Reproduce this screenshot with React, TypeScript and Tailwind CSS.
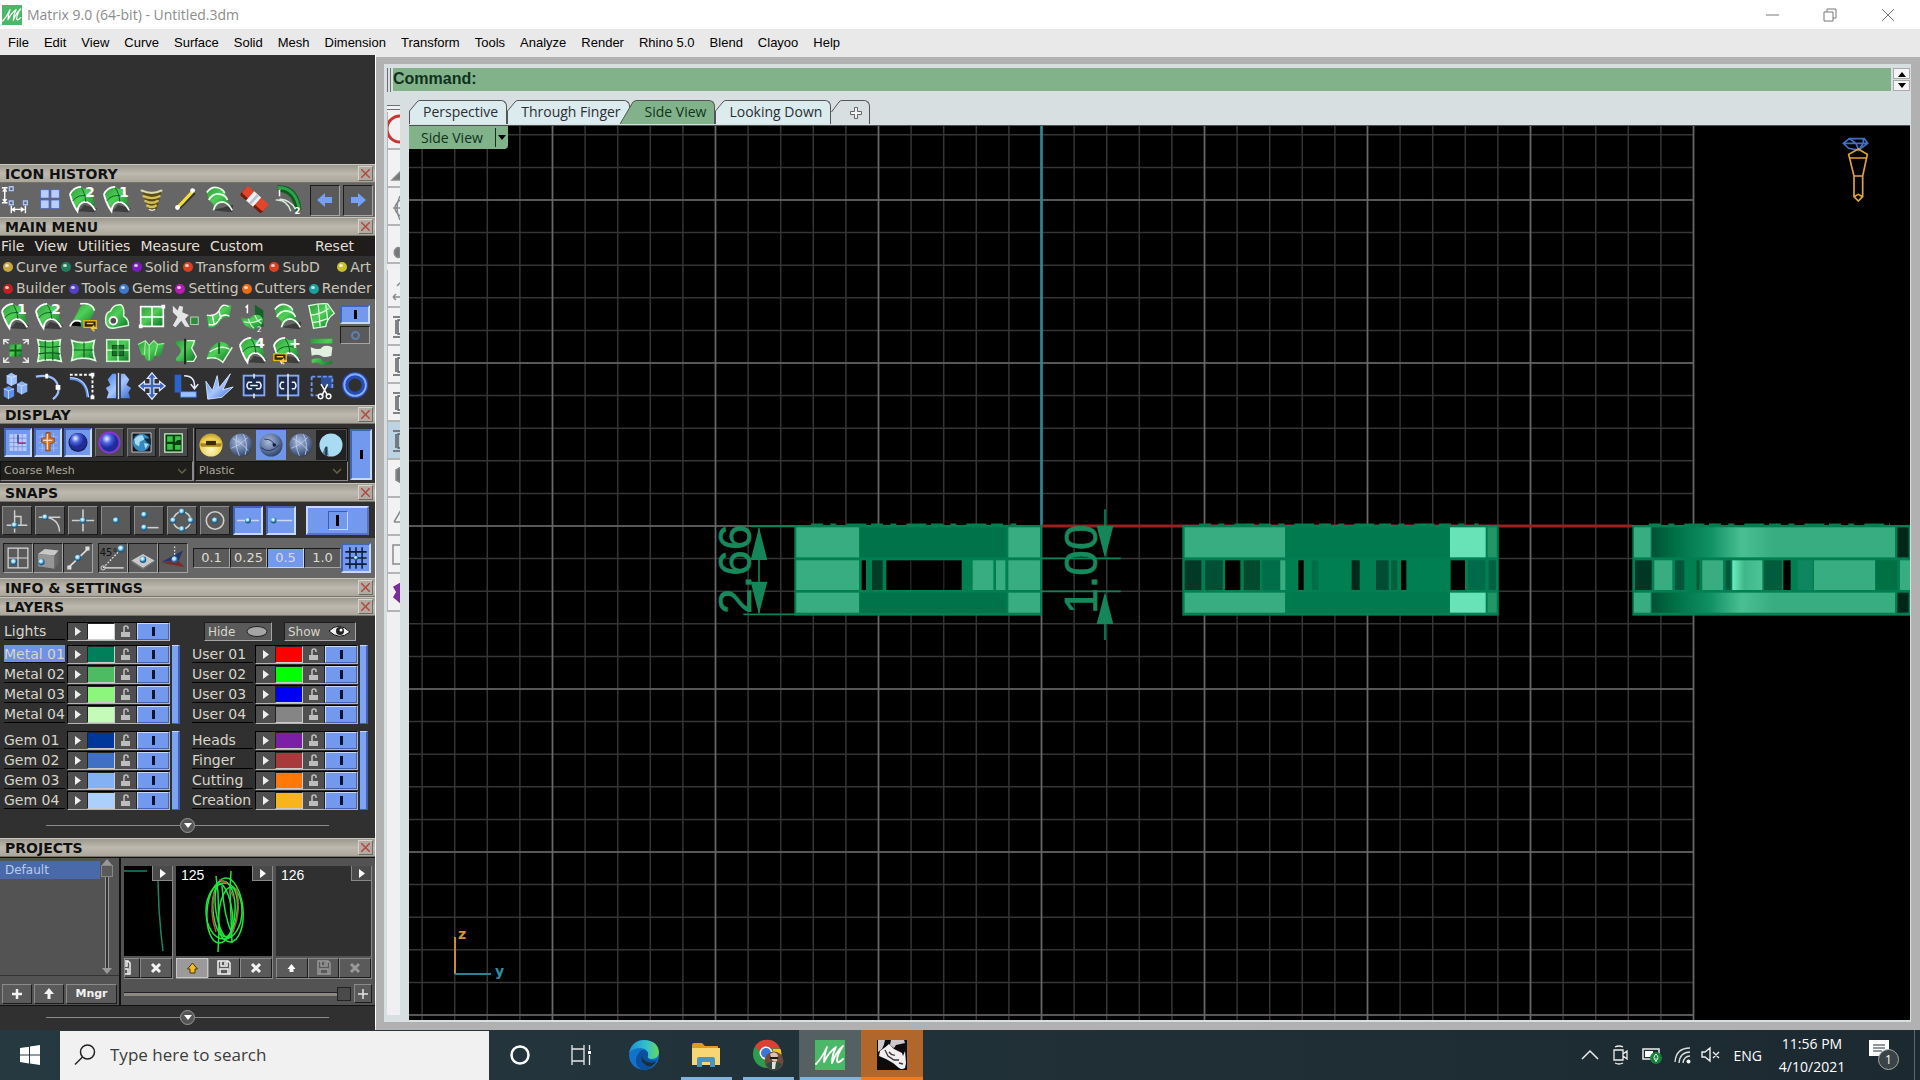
import type { ReactNode } from 'react'

const VERDANA = "font-['DejaVu_Sans',sans-serif]"
const SEGOE = "font-['Open_Sans',sans-serif]"
const ARIAL = "font-['Liberation_Sans',sans-serif]"

const RAISED = 'border border-t-[#8b8b8b] border-l-[#8b8b8b] border-r-[#1c1c1c] border-b-[#1c1c1c] bg-[#5a5a5a]'
const SUNKEN = 'border border-t-[#1c1c1c] border-l-[#1c1c1c] border-r-[#a5a5a5] border-b-[#a5a5a5] bg-[#5a5a5a]'
const BLUE_ON = 'border-2 border-t-[#4264b4] border-l-[#4264b4] border-r-[#c6d8ff] border-b-[#c6d8ff] bg-[#7399ee]'

/* ---------- icon artwork, drawn on a 34 x 34 box ---------- */

const patch = (
    <>
        <path d="M10 29 Q14 27 17 22 L31 26 L28 30 Z" fill="#0006" />
        <path d="M2 11 Q6 3 14 3 Q19 7 24 5 Q27 14 29 28 Q24 19 18 19 Q11 20 10 29 Q5 20 2 11Z" fill="url(#green)" />
        <path d="M2 11 Q6 3 14 3 M2 11 Q5 22 10 29 Q11 20 18 19 Q24 19 29 28" fill="none" stroke="#fff" strokeWidth="2" />
        <path d="M14 4 Q18 9 19 19 M5 18 Q10 10 24 13" fill="none" stroke="#0b5c1c" strokeWidth="1" />
    </>
)

const digit = (d: string) => (
    <text x="18" y="14" fontFamily="DejaVu Sans, sans-serif" fontWeight="bold" fontSize="15" fill="#fff">{d}</text>
)

const yellowTag = (x: number, y: number) => (
    <g transform={`translate(${x} ${y})`}>
        <rect x="0" y="0" width="13" height="7" fill="#2b2200" stroke="#f2b90c" strokeWidth="1.4" />
        <path d="M3 3h7M8 8h6M11 5l-3 3 3 3" stroke="#f2c53a" strokeWidth="1.6" fill="none" />
    </g>
)

const ribs = (
    <>
        <path d="M9 28 L31 22 L30 30Z" fill="#0006" />
        <path d="M3 9 Q8 2 15 4 Q22 6 23 12 L29 27 Q25 20 18 20 Q13 21 12 27 Q10 20 6 18 Q4 13 3 9Z" fill="url(#green)" />
        <path d="M3 9 Q8 2 15 4 Q21 6 22 10 M5 17 Q10 9 18 11 Q23 12 25 17 M10 28 Q12 19 20 19 Q26 20 30 28" fill="none" stroke="#e9ffe9" strokeWidth="1.8" />
    </>
)

const art: Record<string, ReactNode> = {
    dims: (
        <g fill="none" stroke="#fff" strokeWidth="1.5">
            <path d="M5 6v12M2 4h6M2 20h6M3 8l2-3 2 3M3 16l2 3 2-3M14 27h10M16 25l-3 2 3 2M22 25l3 2-3 2M12 23v8M27 23v8" />
            <path d="M10 3h4v4h-4zM10 18h4v4h-4zM25 18h4v4h-4z" stroke="#a9c4ff" />
        </g>
    ),
    panes: <path d="M7 6h9v9H7zM18 6h9v9h-9zM7 17h9v9H7zM18 17h9v9h-9z" fill="#b9ceff" stroke="#4667c0" strokeWidth=".8" />,
    edge1: <>{patch}{digit('1')}</>,
    edge2: <>{patch}{digit('2')}</>,
    edge4: <>{patch}{digit('4')}</>,
    edgePlus: <>{patch}{digit('+')}{yellowTag(2, 20)}</>,
    cone: (
        <g fill="none" strokeLinecap="round">
            <path d="M7 8h20l-5 19q-4 2-9 0z" fill="#5b4d12" />
            <path d="M6 7q11 5 21 0" stroke="#d9d9b0" strokeWidth="2.4" />
            <path d="M8 13q9 4 17 0M10 18q7 4 13 0M12 23q5 3 9 0" stroke="#d3c05a" strokeWidth="2.6" />
            <path d="M14 27q3 2 6 0" stroke="#ddd" strokeWidth="1.4" />
        </g>
    ),
    line: (
        <>
            <path d="M9 26 26 9" stroke="#333" strokeWidth="4" />
            <path d="M8 25 24 8" stroke="#f3df38" strokeWidth="3.4" />
            <circle cx="24" cy="7" r="2.6" fill="#fff" /><circle cx="8" cy="25" r="2.6" fill="#fff" />
        </>
    ),
    ribs,
    eraser: (
        <g transform="rotate(42 17 17)">
            <rect x="2" y="11" width="30" height="12" rx="2" fill="#7a160a" />
            <rect x="2" y="10" width="30" height="10" rx="2" fill="#e0462c" />
            <rect x="11" y="10" width="10" height="13" fill="#f3f3f3" />
            <path d="M15 10h3v13h-3z" fill="#b8c4cf" />
        </g>
    ),
    sweep: (
        <g fill="none">
            <path d="M6 5Q25 4 28 28" stroke="#0d5a1a" strokeWidth="7" />
            <path d="M6 4Q25 3 29 27" stroke="#2ea24a" strokeWidth="3" />
            <path d="M4 17q12-1 16 12M8 16q12 1 17 11" stroke="#d7e8d7" strokeWidth="1.6" />
            <path d="M7 8l1-1v6" stroke="#fff" strokeWidth="1.6" />
            <text x="24" y="32" fontFamily="DejaVu Sans, sans-serif" fontWeight="bold" fontSize="9" fill="#fff">2</text>
        </g>
    ),
    rail: (
        <>
            <path d="M2 26 Q6 20 11 10 Q14 2 22 3 Q28 4 29 9 L23 21 L20 28Z" fill="url(#green)" />
            <path d="M2 26q5-8 11-4l1 5" fill="#000" />
            <path d="M2 27q4-9 12-5M13 3q12-2 15 7" fill="none" stroke="#fff" strokeWidth="1.8" />
            {yellowTag(17, 21)}
        </>
    ),
    planar: (
        <>
            <path d="M4 23 Q3 12 9 11 Q12 3 20 4 Q24 6 23 16 Q29 20 28 26 L12 29 Q5 29 4 23Z" fill="url(#green)" stroke="#d9ffd9" strokeWidth="1.6" />
            <circle cx="12" cy="21" r="4" fill="#4b4b4b" stroke="#fff" strokeWidth="2" />
        </>
    ),
    quads: (
        <>
            <rect x="5" y="6" width="24" height="21" fill="url(#green)" stroke="#fff" strokeWidth="1.8" />
            <path d="M5 17h24M17 6v21" stroke="#fff" strokeWidth="1.8" />
            <path d="M3 25h4v4H3zM27 4h4v4h-4z" fill="#fff" />
        </>
    ),
    runner: (
        <>
            <path d="M3 5l5 5 2-5 4 1-1 6 7 3-4 4 5 9-5-1-4-6-6 7-3-2 5-9-5-5z" fill="#e4e4e4" />
            <rect x="22" y="17" width="8" height="8" fill="#2e8c40" stroke="#b8d8b8" />
        </>
    ),
    drape: (
        <>
            <path d="M3 15Q14 17 17 8Q20 2 29 5L27 18Q20 16 17 22Q13 29 5 28Z" fill="url(#green)" />
            <path d="M3 15Q14 17 17 8Q20 2 26 6M5 25Q13 27 17 18Q20 13 27 16M9 16l2 10M16 11l2 8" fill="none" stroke="#fff" strokeWidth="1.5" />
        </>
    ),
    loftTwo: (
        <>
            <path d="M18 4l9 6v18l-9-5z" fill="#17602a" />
            <path d="M3 17q8 4 14-2 7-2 10 5-1 10-12 10Q5 27 3 17Z" fill="url(#green)" />
            <path d="M11 19q2 7 6 10M18 15q2 6 7 9M6 22q10 3 19-3" fill="none" stroke="#c9f5c9" strokeWidth="1.3" />
            <path d="M8 7l2-2v8" fill="none" stroke="#fff" strokeWidth="1.6" />
            <text x="20" y="33" fontFamily="DejaVu Sans, sans-serif" fontSize="8" fill="#fff">2</text>
        </>
    ),
    fan: (
        <>
            <path d="M3 5Q16 2 23 3L30 13Q22 19 21 27L8 29Z" fill="url(#green)" stroke="#d9ffd9" strokeWidth="1.4" />
            <path d="M5 15q12-1 19-7M13 4l2 23M21 4l2 16M7 23q8-1 15-4" fill="none" stroke="#e9ffe9" strokeWidth="1.3" />
        </>
    ),
    target: (
        <>
            <path d="M10 10h13v13H10z" fill="url(#green)" />
            <path d="M16.5 10v13M10 16.5h13" stroke="#0d5a1a" strokeWidth="2" />
            <path d="M4 10V5h6M24 5h6v5M30 24v5h-6M10 29H4v-5M4 5l5 4M30 5l-5 4M4 29l5-5M30 29l-5-5" fill="none" stroke="#e5e5e5" strokeWidth="1.6" />
        </>
    ),
    mesh: (
        <>
            <path d="M4 5Q16 8 28 5Q26 17 29 28Q16 25 4 28Q7 16 4 5Z" fill="url(#green)" stroke="#d9ffd9" strokeWidth="1.8" />
            <path d="M5 12q12 2 23 0M5 20q12-2 23 0M12 6v21M20 6v21" fill="none" stroke="#0b5c1c" strokeWidth="1.2" />
        </>
    ),
    pinch: (
        <>
            <path d="M4 6Q16 10 28 6Q25 17 29 27Q16 22 4 27Q7 16 4 6Z" fill="url(#green)" stroke="#d9ffd9" strokeWidth="1.8" />
            <path d="M17 8v16M6 16h21" fill="none" stroke="#0b5c1c" strokeWidth="1.2" />
        </>
    ),
    inset: (
        <>
            <rect x="5" y="5" width="24" height="23" fill="url(#green)" stroke="#c9f5c9" strokeWidth="1.6" />
            <rect x="11" y="11" width="12" height="11" fill="#1d6b2a" stroke="#0a4a16" />
            <path d="M17 5v6M17 22v6M5 16h6M23 16h6" stroke="#e9ffe9" strokeWidth="1.4" />
            <path d="M17 11v11M11 16h12" stroke="#57c45e" strokeWidth="1.4" />
        </>
    ),
    folds: (
        <>
            <path d="M2 10l8-4 4 5 5-5 4 4 7-1-4 14-6-1-3 6-6-1-2-5-3-1z" fill="url(#green)" />
            <path d="M2 10l8-4 4 5 5-5 4 4 7-1M10 6l-1 15M14 11v16M23 10l-3 12" fill="none" stroke="#a7efa7" strokeWidth="1.2" />
        </>
    ),
    revolve: (
        <>
            <path d="M7 6h17q5 2 2 5-6 5 0 11 3 3-2 6H8q-4-2 1-6 5-5 0-10-5-4-2-6z" fill="url(#green)" />
            <path d="M18 6h8l-3 8 5 9-3 5h-7" fill="none" stroke="#d9ffd9" strokeWidth="1.4" />
            <path d="M16 4v27" stroke="#111" strokeWidth="1.6" />
        </>
    ),
    dome: (
        <>
            <path d="M3 25Q7 9 18 7Q27 9 28 16L20 28Q11 24 3 25Z" fill="url(#green)" />
            <path d="M3 25q10-3 17 4l10-16M6 18q12-8 21-3" fill="none" stroke="#d9ffd9" strokeWidth="1.6" />
            <path d="M16 8v12" stroke="#0b4a16" strokeWidth="1.6" />
        </>
    ),
    strips: (
        <>
            <path d="M5 4h23v5H5zM6 26q10-3 11 1 2 3 11 0v3q-10 4-13 1-2-3-9-1z" fill="url(#green)" />
            <path d="M5 13q10 4 12 0 4-3 11 0l-1 9q-8 3-11 0-4-2-10 0z" fill="#dff0df" />
        </>
    ),
    cubes: (
        <>
            <path d="M7 6l5-3 6 3v8l-6 3-5-3z" fill="#9dc1ff" /><path d="M18 15l5-3 6 3v8l-6 3-5-3z" fill="#88b0f7" /><path d="M4 20l5-3 6 3v8l-6 3-5-3z" fill="#5f8fec" />
            <path d="M7 6l5 2 6-2M12 8v9M18 15l5 2 6-2M23 17v9M4 20l5 2 6-2M9 22v9" fill="none" stroke="#d9e6ff" strokeWidth=".8" />
        </>
    ),
    arc: (
        <>
            <path d="M2 7Q25 3 26 21Q26 27 20 31" fill="none" stroke="#9dbbf7" strokeWidth="2.4" />
            <path d="M12 4h3v5h-3zM23 16h5v5h-5z" fill="#fff" />
        </>
    ),
    fillet: (
        <g fill="none">
            <path d="M2 5h24v24" stroke="#fff" strokeWidth="2" strokeDasharray="3 2" />
            <path d="M2 9Q20 9 21 29" stroke="#5b8df0" strokeWidth="3" />
            <path d="M2 8Q20 8 22 29" stroke="#cfe0ff" strokeWidth="1" />
            <path d="M24 3h4v4h-4zM24 27h4v4h-4z" fill="#fff" />
        </g>
    ),
    mirror: (
        <>
            <path d="M15 4h-4l-5 6 3 6-5 3 3 5-2 6h10zM20 4h4l5 6-3 6 5 3-3 5 2 6H20z" fill="url(#blue)" />
            <path d="M17.5 3v28" stroke="#cfe0ff" strokeWidth="1.5" />
        </>
    ),
    move: <path d="M17 3l5 6h-3v6h6v-3l6 5-6 5v-3h-6v6h3l-5 6-5-6h3v-6H9v3l-6-5 6-5v3h6V9h-3z" fill="#3f63b8" stroke="#dce8ff" strokeWidth="1.3" />,
    rotate: (
        <>
            <path d="M5 5h7v19H5z" fill="#2d62cc" /><path d="M11 23h17v6H11z" fill="#9dc0ff" stroke="#2d62cc" />
            <path d="M15 6Q27 6 26 19M22 15l4 5 4-5" fill="none" stroke="#e8efff" strokeWidth="1.6" />
        </>
    ),
    splay: <path d="M4 31L2 12l7 10L14 6l2 13L28 4l-8 17 11-3-12 11Z" fill="url(#blue)" stroke="#cfe0ff" strokeWidth="1" />,
    chain: (
        <g fill="none" stroke="#e8efff" strokeWidth="1.6">
            <rect x="6" y="6" width="22" height="21" stroke="#83a8f5" strokeWidth="2" fill="#1e2b4b" />
            <path d="M15 13h-4q-3 3.500 0 7h4M19 13h4q3 3.500 0 7h-4M13 16.500h8M17 4v5M17 25v5" />
        </g>
    ),
    unchain: (
        <g fill="none" stroke="#e8efff" strokeWidth="1.6">
            <rect x="6" y="6" width="22" height="21" stroke="#83a8f5" strokeWidth="2" fill="#1e2b4b" />
            <path d="M13 13h-3q-3 3.500 0 7h3M21 13h3q3 3.500 0 7h-3M17 4v28" />
        </g>
    ),
    cut: (
        <>
            <path d="M16 6h12v14L16 16z" fill="#2d4f95" />
            <path d="M6 7h22v14M6 7v20h11" fill="none" stroke="#6d96ee" strokeWidth="2" strokeDasharray="4 2" />
            <path d="M16 15l7 12M23 15l-6 12" stroke="#fff" strokeWidth="1.6" />
            <circle cx="15.5" cy="28" r="2.5" fill="none" stroke="#fff" strokeWidth="1.5" /><circle cx="24" cy="28" r="2.5" fill="none" stroke="#fff" strokeWidth="1.5" />
        </>
    ),
    torus: (
        <>
            <circle cx="16" cy="16" r="10.5" fill="none" stroke="#274db5" strokeWidth="7" />
            <circle cx="16" cy="16" r="11.5" fill="none" stroke="#86acff" strokeWidth="2" />
        </>
    ),

    /* display */
    cplane: (
        <>
            <path d="M5 5h24v24H5z" fill="#b9caff" />
            <path d="M5 11h24M5 17h24M5 23h24M11 5v24M17 5v24M23 5v24" stroke="#6f86d8" strokeWidth="1" />
            <path d="M17 6v12" stroke="#2338c8" strokeWidth="2" /><path d="M17 18h11" stroke="#d0145a" strokeWidth="2" />
        </>
    ),
    ornament: (
        <>
            <path d="M4 9h26M4 17h26M4 25h26M9 4v26M17 4v26M25 4v26" stroke="#a9c2ff" strokeWidth="1" />
            <path d="M14 3h6v7l6 1v6l-6 2v10h-6V19l-6-2v-6l6-1z" fill="#d4762c" stroke="#7c3608" strokeWidth="1" />
            <path d="M16 5v22M10 14h13" stroke="#ffe2c4" strokeWidth="1.8" />
        </>
    ),
    sphereBlue: (
        <>
            <circle cx="17" cy="17" r="13.5" fill="#16245c" />
            <circle cx="17" cy="16" r="12" fill="url(#ballBlue)" />
        </>
    ),
    spherePurple: (
        <>
            <circle cx="17" cy="17" r="14" fill="#8a35d6" />
            <circle cx="17" cy="17" r="11.5" fill="url(#ballBlue)" />
        </>
    ),
    globe: (
        <>
            <path d="M5 5h24v24H5z" fill="#14181c" stroke="#dfe8ef" strokeWidth="1" />
            <circle cx="17" cy="17" r="11" fill="#3688bd" />
            <path d="M8 13q5-6 10-5l3 5-6 3-1 6-5-3zM20 18l6 1-4 6z" fill="#a4dcf7" />
            <path d="M20 12h9v8l-5-3z" fill="#152a38" />
        </>
    ),
    gridGreen: (
        <>
            <path d="M6 6h22v23H6z" fill="#0c3d12" stroke="#c9f0c9" strokeWidth="1.6" />
            <path d="M9 9h7v7H9zM19 9h7v5h-4l-3 3zM9 19h7v7H9zM19 20h7v6h-7z" fill="#37c445" />
        </>
    ),
    gold: (
        <>
            <circle cx="17" cy="17" r="14" fill="url(#ballGold)" />
            <path d="M4 15h26q0 3-1 4H5q-1-1-1-4z" fill="#a88420" /><path d="M11 12h12v5H11z" fill="#3b2a04" />
        </>
    ),
    wire: (
        <>
            <circle cx="17" cy="17" r="14" fill="url(#ballSlate)" />
            <path d="M7 9q10 4 19 15M5 21Q16 18 25 8M12 5q-3 12 3 25M20 4q6 12 2 25" fill="none" stroke="#c3d2ea" strokeWidth="1" />
        </>
    ),
    slate: (
        <>
            <circle cx="17" cy="17" r="14" fill="url(#ballSlate)" />
            <path d="M9 10q9-1 13 8M19 15l3 3M5 20q10 9 22-3" fill="none" stroke="#1a2948" strokeWidth="1" />
            <circle cx="21" cy="17" r="2" fill="#111c33" />
        </>
    ),
    glass: (
        <>
            <circle cx="17" cy="17" r="14" fill="#a9dcf2" />
            <path d="M7 28q2-10 6-9l1 11q-4 0-7-2z" fill="#4c7d96" /><path d="M11 19v11" stroke="#10252f" strokeWidth="1.6" />
        </>
    ),

    /* snaps */
    perp: <><path d="M4 23h26M14 4v28M14 12h8v11" fill="none" stroke="#cfcfcf" strokeWidth="1.8" /><circle cx="14" cy="23" r="4" fill="url(#dot)" /></>,
    tangent: <><path d="M3 13h27M12 13Q28 15 29 31" fill="none" stroke="#cfcfcf" strokeWidth="1.8" /><circle cx="11" cy="13" r="4" fill="url(#dot)" /></>,
    cross: <><path d="M3 17h28M17 3v28" stroke="#cfcfcf" strokeWidth="2" /><circle cx="17" cy="17" r="4" fill="url(#dot)" /></>,
    point: <circle cx="17" cy="17" r="4" fill="url(#dot)" />,
    near: <><path d="M12 26h17" stroke="#cfcfcf" strokeWidth="2" /><circle cx="11" cy="10" r="4" fill="url(#dot)" /><circle cx="11" cy="26" r="4" fill="url(#dot)" /></>,
    quad: <><circle cx="17" cy="17" r="11" fill="none" stroke="#cfcfcf" strokeWidth="2" /><circle cx="17" cy="6" r="4" fill="url(#dot)" /><circle cx="17" cy="28" r="4" fill="url(#dot)" /><circle cx="6" cy="17" r="4" fill="url(#dot)" /><circle cx="28" cy="17" r="4" fill="url(#dot)" /></>,
    center: <><circle cx="17" cy="17" r="11" fill="none" stroke="#cfcfcf" strokeWidth="2" /><circle cx="17" cy="17" r="4" fill="url(#dot)" /></>,
    mid: <><path d="M2 17h30" stroke="#cfd8f0" strokeWidth="2" /><circle cx="17" cy="17" r="4" fill="url(#dot)" /></>,
    end: <><path d="M7 17h25" stroke="#cfd8f0" strokeWidth="2" /><circle cx="7" cy="17" r="4" fill="url(#dot)" /></>,
    snapGrid: <><path d="M5 5h24v24H5zM5 17h24M17 5v24" fill="none" stroke="#d8d8d8" strokeWidth="1.5" /><circle cx="12" cy="22" r="4" fill="url(#dot)" /></>,
    box: <><path d="M5 12l8-6 17 2-5 6z" fill="#c8c8c8" /><path d="M5 12l20 2v16L5 27z" fill="#969696" /><path d="M25 14l5-6v15l-5 7z" fill="#666" /><circle cx="9" cy="22" r="4" fill="url(#dot)" /></>,
    segment: <><path d="M6 28L29 6" stroke="#ddd" strokeWidth="2" /><path d="M4 26h5v5H4zM26 3h5v5h-5z" fill="#ddd" /><circle cx="17" cy="17" r="4" fill="url(#dot)" /></>,
    angle: (
        <>
            <text x="1" y="14" fontFamily="DejaVu Sans, sans-serif" fontSize="12" fill="#111">45°</text>
            <path d="M5 29L26 7" stroke="#eee" strokeWidth="1.5" strokeDasharray="2 2" /><path d="M7 29h23" stroke="#eee" strokeWidth="1.5" />
            <circle cx="5" cy="29" r="2.5" fill="none" stroke="#eee" /><circle cx="27" cy="6" r="4.5" fill="url(#dot)" />
        </>
    ),
    plane: <><path d="M17 12l14 8-14 9L3 20z" fill="#c9c9c9" /><path d="M3 20l14 9 14-9v2l-14 9L3 22z" fill="#777" /><circle cx="17" cy="19" r="4" fill="url(#dot)" /></>,
    project: <><path d="M3 22L29 8l-5 12z" fill="#27366a" /><path d="M3 23l20-3 8 8z" fill="#7c2a2a" /><path d="M19 3v18" stroke="#ddd" strokeDasharray="2 2" strokeWidth="1.5" /><circle cx="19" cy="19" r="4" fill="url(#dot)" /></>,
    hash: <><path d="M3 9h28M3 17h28M3 25h28M9 3v28M17 3v28M25 3v28" stroke="#111c3c" strokeWidth="2" /><circle cx="17" cy="17" r="3" fill="url(#dot)" /></>,
}

interface IconProps {
    name: string;
    className?: string;
}

const Icon = ({ name, className = 'w-[34px] h-[34px]' }: IconProps) => (
    <svg viewBox="0 0 34 34" className={`block shrink-0 ${className}`}>{art[name]}</svg>
)

const Gradients = () => (
    <svg width="0" height="0" className="absolute">
        <defs>
            <linearGradient id="green" x1="0" y1="0" x2="1" y2="1">
                <stop offset="0" stopColor="#2c9a3c" /><stop offset=".45" stopColor="#4fcf57" /><stop offset="1" stopColor="#0d7426" />
            </linearGradient>
            <linearGradient id="blue" x1="0" y1="0" x2="1" y2="1">
                <stop offset="0" stopColor="#4b82ea" /><stop offset=".5" stopColor="#a6c6ff" /><stop offset="1" stopColor="#3366cf" />
            </linearGradient>
            <linearGradient id="band">
                <stop offset="0" stopColor="#005235" /><stop offset=".1" stopColor="#007147" /><stop offset=".24" stopColor="#109064" />
                <stop offset=".37" stopColor="#4abf94" /><stop offset=".5" stopColor="#38ad82" /><stop offset="1" stopColor="#38ad82" />
            </linearGradient>
            <linearGradient id="shine">
                <stop offset="0" stopColor="#6cefc0" /><stop offset=".4" stopColor="#3fb78b" /><stop offset="1" stopColor="#4fc298" />
            </linearGradient>
            <radialGradient id="dot" cx=".4" cy=".35"><stop offset="0" stopColor="#fff" /><stop offset=".5" stopColor="#8fd6f5" /><stop offset="1" stopColor="#1b5e8a" /></radialGradient>
            <radialGradient id="ballBlue" cx=".35" cy=".3"><stop offset="0" stopColor="#f2f5ff" /><stop offset=".5" stopColor="#4a63e0" /><stop offset="1" stopColor="#202c98" /></radialGradient>
            <radialGradient id="ballGold" cx=".5" cy=".7" r=".7"><stop offset="0" stopColor="#fff6c4" /><stop offset=".7" stopColor="#edcf4c" /><stop offset="1" stopColor="#b89a30" /></radialGradient>
            <radialGradient id="ballSlate" cx=".4" cy=".35" r=".7"><stop offset="0" stopColor="#a9bcdb" /><stop offset=".6" stopColor="#5d739c" /><stop offset="1" stopColor="#2c3d5e" /></radialGradient>
        </defs>
    </svg>
)

/* ---------- window chrome ---------- */

const MatrixLogo = ({ className }: { className: string }) => (
    <svg viewBox="0 0 30 30" className={className}>
        <rect width="30" height="30" fill="#4bb868" />
        <path d="M1 24Q7 18 12 7Q9 16 9 22Q14 12 21 7Q17 15 17 23Q21 12 28 6Q22 15 22 20Q22 25 28 19" fill="none" stroke="#fff" strokeWidth="1.8" strokeLinejoin="round" strokeLinecap="round" />
    </svg>
)

const TitleBar = () => (
    <header className={`flex items-center h-[29px] shrink-0 bg-white text-[#8c8c8c] text-[14px] ${SEGOE}`}>
        <MatrixLogo className="w-[20px] h-[20px] ml-[2px] mr-[5px]" />
        <h1>Matrix 9.0 (64-bit) - Untitled.3dm</h1>
        <div className="flex ml-auto mr-[3px]">
            {['M11 14h13', 'M11 11h9v9h-9zM14 11V8h9v9h-3', 'M11 8l12 12M23 8L11 20'].map((d, i) => (
                <button key={d} aria-label={['Minimize', 'Restore', 'Close'][i]} className="flex items-center justify-center w-[58px] h-[29px]">
                    <svg width="34" height="28" fill="none" stroke="#777"><path d={d} /></svg>
                </button>
            ))}
        </div>
    </header>
)

const menus = ['File', 'Edit', 'View', 'Curve', 'Surface', 'Solid', 'Mesh', 'Dimension', 'Transform', 'Tools', 'Analyze', 'Render', 'Rhino 5.0', 'Blend', 'Clayoo', 'Help']

const MenuBar = () => (
    <nav className={`flex items-center gap-[15px] h-[26px] pt-[2px] px-2 shrink-0 bg-[#e9e9e9] text-black text-[13px] ${ARIAL}`}>
        {menus.map((m) => <button key={m}>{m}</button>)}
    </nav>
)

/* ---------- left panels ---------- */

const PanelHeader = ({ title }: { title: string }) => (
    <div className="flex items-center justify-between h-[19px] shrink-0 pl-[5px] pr-[2px] border-y border-t-[#c9c6bd] border-b-[#77746c] bg-linear-to-b from-[#9c998f] via-[#bdb9af] to-[#aaa69c]">
        <h2 className="pt-[2px] text-[14px] leading-[17px] font-bold text-[#111]">{title}</h2>
        <button aria-label={`Close ${title}`} className="flex items-center justify-center w-[15px] h-[15px] border border-[#6e6a62] border-t-[#d8d4cc] border-l-[#d8d4cc] bg-[#b0aca4]">
            <svg width="9" height="9" stroke="#b5483f" strokeWidth="1.5"><path d="M0 0l9 9M9 0L0 9" /></svg>
        </button>
    </div>
)

const IconHistory = () => (
    <div className="flex items-center h-[34px] shrink-0 bg-[#666]">
        {['dims', 'panes', 'edge2', 'edge1', 'cone', 'line', 'ribs', 'eraser', 'sweep'].map((n) => (
            <button key={n} aria-label={n} className="w-[34px]"><Icon name={n} className="w-[32px] h-[32px]" /></button>
        ))}
        <div className="flex gap-[3px] ml-[4px]">
            {['M17 9H10V5L2 12l8 7v-4h7z', 'M3 9h7V5l8 7-8 7v-4H3z'].map((d, i) => (
                <button key={d} aria-label={i ? 'Next' : 'Previous'} className={`flex items-center justify-center w-[30px] h-[31px] ${SUNKEN}`}>
                    <svg width="20" height="24" fill="#76a0f5"><path d={d} /></svg>
                </button>
            ))}
        </div>
    </div>
)

interface CategoryProps {
    label: string;
    color: string;
}

const Category = ({ label, color }: CategoryProps) => (
    <button className="flex items-center gap-[3px]">
        <svg width="10" height="10" className="mt-px">
            <circle cx="5" cy="5" r="5" fill={color} /><ellipse cx="4" cy="3.5" rx="2" ry="1.6" fill="#fff" opacity=".75" />
        </svg>
        {label}
    </button>
)

const topCategories = [
    { label: 'Curve', color: '#c9a640' }, { label: 'Surface', color: '#1f7d5c' }, { label: 'Solid', color: '#7a1cc2' },
    { label: 'Transform', color: '#d84020' }, { label: 'SubD', color: '#d84020' },
]
const bottomCategories = [
    { label: 'Builder', color: '#c42020' }, { label: 'Tools', color: '#5540c8' }, { label: 'Gems', color: '#3f78c8' },
    { label: 'Setting', color: '#b81cb8' }, { label: 'Cutters', color: '#e86c18' }, { label: 'Render', color: '#1aa0a0' },
]

const greenTools = [
    'edge1', 'edge2', 'rail', 'planar', 'quads', 'runner', 'drape', 'loftTwo', 'ribs', 'fan',
    'target', 'mesh', 'pinch', 'inset', 'folds', 'revolve', 'dome', 'edge4', 'edgePlus', 'strips',
]
const blueTools = ['cubes', 'arc', 'fillet', 'mirror', 'move', 'rotate', 'splay', 'chain', 'unchain', 'cut', 'torus']

const MainMenu = () => (
    <div className="shrink-0 text-[14px] leading-[20px] text-[#e2dfd5]">
        <div className="flex gap-[10px] h-[20px] pl-px pr-[21px] bg-[#1f1d1c]">
            {['File', 'View', 'Utilities', 'Measure', 'Custom'].map((m) => <button key={m}>{m}</button>)}
            <button className="ml-auto">Reset</button>
        </div>
        <div className="h-[43px] bg-[#303030] text-[#c9c6ba]">
            <div className="flex gap-1 h-[21px] pl-[3px] pr-[4px] whitespace-nowrap">
                {topCategories.map((c) => <Category key={c.label} {...c} />)}
                <div className="flex ml-auto"><Category label="Art" color="#c8c02c" /></div>
            </div>
            <div className="flex gap-[3px] h-[22px] pl-[3px] whitespace-nowrap">
                {bottomCategories.map((c) => <Category key={c.label} {...c} />)}
            </div>
        </div>
        <div className="flex h-[69px] bg-[#666]">
            <div className="grid grid-cols-10 content-center w-[340px] pt-px">
                {greenTools.map((n, i) => <button key={i} aria-label={n}><Icon name={n} className="w-[32px] h-[34px]" /></button>)}
            </div>
            <div className="pt-[6px]">
                <button aria-label="Builder on" className={`flex items-center justify-center w-[30px] h-[19px] ${BLUE_ON}`}><span className="w-[3px] h-[9px] bg-black" /></button>
                <button aria-label="Builder off" className={`flex items-center justify-center w-[30px] h-[18px] mt-[2px] ${SUNKEN}`}><span className="w-[9px] h-[9px] rounded-full border-2 border-[#5f7fae]" /></button>
            </div>
        </div>
        <div className="flex items-center h-[37px] pb-[2px] bg-[#303030]">
            {blueTools.map((n) => <button key={n} aria-label={n} className="w-[34px]"><Icon name={n} className="w-[32px] h-[34px]" /></button>)}
        </div>
    </div>
)

interface PickerProps {
    label: string;
    value: string;
}

const Picker = ({ label, value }: PickerProps) => (
    <div className="relative h-[20px] border border-[#111] border-r-[#8b8b8b] border-b-[#8b8b8b] bg-[#201e1b]">
        <select aria-label={label} className="block appearance-none w-full h-[18px] pl-[3px] bg-transparent text-[11px] leading-[18px] text-[#aaa79d]">
            <option>{value}</option>
        </select>
        <svg width="9" height="6" className="absolute right-[5px] top-[6px]" fill="none" stroke="#66634c" strokeWidth="1.5"><path d="M0 1l4 4 4-4" /></svg>
    </div>
)

const Display = () => (
    <div className="flex h-[59px] shrink-0 pt-[4px] pb-[2px] bg-[#303030]">
        <div className="w-[194px] shrink-0 border-r border-[#888]">
            <div className="flex gap-[2px] h-[33px] pl-[4px]">
                {['cplane', 'ornament', 'sphereBlue'].map((n) => (
                    <button key={n} aria-label={n} className={`w-[28px] h-[29px] ${BLUE_ON}`}><Icon name={n} className="w-full h-full" /></button>
                ))}
                {['spherePurple', 'globe', 'gridGreen'].map((n) => (
                    <button key={n} aria-label={n} className="w-[29px] h-[29px] ml-px border border-[#1c1c1c] border-t-[#777] border-l-[#777] bg-[#4c4c4c]"><Icon name={n} className="w-full h-full" /></button>
                ))}
            </div>
            <Picker label="Mesh quality" value="Coarse Mesh" />
        </div>
        <div className="w-[153px] shrink-0 ml-px">
            <div className="flex h-[33px] pt-px border border-[#111] border-b-0 bg-[#4c4c4c]">
                {['gold', 'wire', 'slate', 'wire', 'glass'].map((n, i) => (
                    <button key={i} aria-label={n} className={`flex items-center justify-center w-[30px] h-[30px] ${i === 2 ? 'bg-[#6f95ea]' : i === 4 ? 'bg-[#222]' : ''}`}><Icon name={n} className="w-[28px] h-[28px]" /></button>
                ))}
            </div>
            <Picker label="Material" value="Plastic" />
        </div>
        <button aria-label="Shading on" className={`flex items-center justify-center w-[22px] h-[51px] mt-px ml-[2px] ${BLUE_ON}`}><span className="w-[3px] h-[9px] bg-black" /></button>
    </div>
)

const Snaps = () => (
    <div className="shrink-0">
        <div className="flex items-center gap-[3px] h-[36px] pl-[2px] bg-[#303030]">
            {['perp', 'tangent', 'cross', 'point', 'near', 'quad', 'center', 'mid', 'end'].map((n) => (
                <button key={n} aria-label={n} className={`w-[30px] h-[29px] ${n === 'mid' || n === 'end' ? BLUE_ON : RAISED}`}><Icon name={n} className="w-full h-full" /></button>
            ))}
            <button aria-label="Snaps on" className="flex items-center justify-center w-[63px] h-[29px] ml-[7px] border-2 border-[#5674bd] border-t-[#c6d8ff] border-l-[#c6d8ff] bg-[#7399ee]">
                <span className="flex items-center justify-center w-[20px] h-[19px] border border-[#3f5ca8] border-r-[#c6d8ff] border-b-[#c6d8ff]"><span className="w-[3px] h-[11px] bg-black" /></span>
            </button>
        </div>
        <div className="flex items-center h-[40px] pl-[3px] bg-[#666]">
            {['snapGrid', 'box', 'segment'].map((n) => (
                <button key={n} aria-label={n} className={`w-[30px] h-[30px] ${SUNKEN}`}><Icon name={n} className="w-full h-full" /></button>
            ))}
            <div className="flex mx-[5px]">
                {['angle', 'plane', 'project'].map((n) => (
                    <button key={n} aria-label={n} className={`w-[30px] h-[30px] ${SUNKEN}`}><Icon name={n} className="w-full h-full" /></button>
                ))}
            </div>
            {['0.1', '0.25', '0.5', '1.0'].map((v) => (
                <button key={v} className={`w-[37px] h-[20px] text-[13px] leading-[18px] text-[#dedbd0] ${v === '0.5' ? 'border border-[#c6d8ff] border-t-[#111] border-l-[#111] bg-[#7399ee]' : SUNKEN}`}>{v}</button>
            ))}
            <button aria-label="Grid snap" className={`w-[30px] h-[30px] ${BLUE_ON}`}><Icon name="hash" className="w-full h-full" /></button>
        </div>
    </div>
)

interface LayerProps {
    name: string;
    color: string;
    active?: boolean;
}

const Layer = ({ name, color, active }: LayerProps) => (
    <li className="flex items-start h-[20px]">
        <button className={`w-[61px] h-[18px] shrink-0 pt-px border-b border-black text-left text-[14px] leading-[16px] whitespace-nowrap text-[#d8d5ca] ${active ? 'bg-[#6d92e6]' : ''}`}>{name}</button>
        <div className="flex w-[103px] h-[19px] ml-[2px] border border-t-black border-l-black border-r-[#b5b5b5] border-b-[#b5b5b5] bg-[#4f4f4f]">
            <button aria-label={`${name} options`} className="flex items-center justify-center w-[19px]">
                <svg width="6" height="9" fill="#eee"><path d="M0 0l6 4.500L0 9z" /></svg>
            </button>
            <button aria-label={`${name} color`} className="w-[28px] border border-t-[#222] border-l-[#222] border-r-[#ccc] border-b-[#ccc]" style={{ background: color }} />
            <button aria-label={`Lock ${name}`} className="flex items-center justify-center w-[22px] border-r border-[#222]">
                <svg width="11" height="13"><path d="M1 7h9v5H1z" fill="#bdbdbd" /><path d="M4 7V3q0-2 2-2t2 2v1" fill="none" stroke="#bdbdbd" strokeWidth="1.6" /></svg>
            </button>
            <button aria-label={`Show ${name}`} className="flex items-center justify-center flex-1 border border-t-[#c6d8ff] border-l-[#c6d8ff] border-r-[#4264b4] border-b-[#4264b4] bg-[#7399ee]"><span className="w-[3px] h-[9px] bg-[#0a1430]" /></button>
        </div>
    </li>
)

const LayerGroup = ({ layers }: { layers: LayerProps[] }) => (
    <div className="flex w-[176px] gap-[2px]">
        <ul>{layers.map((l) => <Layer key={l.name} {...l} />)}</ul>
        <button aria-label="Toggle group" className="w-[8px] h-[79px] border-r-2 border-b border-[#3f62b4] border-t border-t-[#c6d8ff] bg-[#7ea3f2]" />
    </div>
)

const groups: LayerProps[][] = [
    [{ name: 'Metal 01', color: '#00805a', active: true }, { name: 'Metal 02', color: '#4cbb62' }, { name: 'Metal 03', color: '#8cf57c' }, { name: 'Metal 04', color: '#c4fbb8' }],
    [{ name: 'User 01', color: '#ff0000' }, { name: 'User 02', color: '#00ff00' }, { name: 'User 03', color: '#0000f5' }, { name: 'User 04', color: '#858585' }],
    [{ name: 'Gem 01', color: '#00379b' }, { name: 'Gem 02', color: '#3f70c4' }, { name: 'Gem 03', color: '#84b1f3' }, { name: 'Gem 04', color: '#acd0fb' }],
    [{ name: 'Heads', color: '#7a1fa6' }, { name: 'Finger', color: '#a83a3c' }, { name: 'Cutting', color: '#ff7808' }, { name: 'Creation', color: '#f8b41c' }],
]

const Expander = () => (
    <div className="flex items-center h-[22px] px-[46px] shrink-0">
        <span className="flex-1 h-px bg-[#8a8a8a]" />
        <button aria-label="Expand" className="flex items-center justify-center w-[15px] h-[15px] rounded-full border border-[#999] bg-[#555]">
            <svg width="8" height="5" fill="#fff"><path d="M0 0h8L4 5z" /></svg>
        </button>
        <span className="flex-1 h-px bg-[#8a8a8a]" />
    </div>
)

const Layers = () => (
    <div className="h-[222px] shrink-0 pt-[6px] bg-[#303030]">
        <div className="flex items-start h-[23px] pl-[4px]">
            <ul><Layer name="Lights" color="#ffffff" /></ul>
            <button className={`flex items-center justify-between w-[68px] h-[19px] ml-[34px] px-[3px] text-[12px] text-[#d8d5ca] ${SUNKEN}`}>
                Hide
                <svg width="22" height="11"><ellipse cx="11" cy="5.5" rx="10" ry="5" fill="#a5a5a5" stroke="#222" /></svg>
            </button>
            <button className={`flex items-center justify-between w-[72px] h-[19px] ml-[12px] px-[3px] text-[12px] text-[#d8d5ca] ${SUNKEN}`}>
                Show
                <svg width="24" height="13"><path d="M1 6q10-10 21 1-11 9-21-1z" fill="#eee" stroke="#111" /><circle cx="12" cy="6" r="4" fill="#222" /><circle cx="13" cy="5" r="1.5" fill="#fff" /></svg>
            </button>
        </div>
        <div className="grid grid-cols-[188px_176px] gap-y-[6px] pl-[4px]">
            {groups.map((g) => <LayerGroup key={g[0].name} layers={g} />)}
        </div>
        <div className="pt-[3px]"><Expander /></div>
    </div>
)

const floppy = 'M2 1h10l2 2v11H2zM5 1v5h6V1M4 14V9h8v5M9 2v3'
const close = 'M4 4l8 8M12 4l-8 8'

interface SlotButtonProps {
    label: string;
    d: string;
    muted?: boolean;
    thick?: boolean;
}

const SlotButton = ({ label, d, muted, thick }: SlotButtonProps) => (
    <button aria-label={label} className={`flex items-center justify-center flex-1 h-[20px] ${RAISED}`}>
        <svg width="16" height="16" fill="none" stroke={muted ? '#999' : '#f2f2f2'} strokeWidth={thick ? 3 : 1.5}><path d={d} /></svg>
    </button>
)

const PlayCorner = () => (
    <span className="flex items-center justify-center w-[20px] h-[15px] ml-auto bg-[#4a4a4a] border-l border-b border-[#888]">
        <svg width="6" height="9" fill="#fff"><path d="M0 0l6 4.500L0 9z" /></svg>
    </span>
)

const Projects = () => (
    <div className="flex h-[149px] shrink-0 border-y border-[#111] bg-[#535353]">
        <div className="flex flex-col w-[121px] border-r-2 border-[#111]">
            <div className="flex flex-1 border-b border-[#333]">
                <ul className="flex-1 pt-[3px]">
                    <li className="h-[18px] pl-[5px] bg-[#4a69a8] text-[12px] leading-[18px] text-[#b8ccec]">Default</li>
                </ul>
                <div className="flex flex-col items-center w-[14px] mr-[5px]">
                    <svg width="10" height="7" fill="#999"><path d="M0 7h10L5 1z" /></svg>
                    <span className="w-[12px] h-[12px] border border-[#888] bg-[#5a5a5a]" />
                    <span className="w-[4px] flex-1 border-x border-[#999] bg-[#333]" />
                    <svg width="10" height="7" fill="#999"><path d="M0 0h10L5 6z" /></svg>
                </div>
            </div>
            <div className="flex gap-[2px] pt-[8px] pb-px pl-[2px] pr-[2px]">
                <button aria-label="Add project" className={`flex items-center justify-center w-[30px] h-[20px] ${RAISED}`}><svg width="12" height="12" stroke="#f2f2f2" strokeWidth="2.5"><path d="M6 1v10M1 6h10" /></svg></button>
                <button aria-label="Move up" className={`flex items-center justify-center w-[30px] h-[20px] ${RAISED}`}><svg width="12" height="12" fill="#f2f2f2"><path d="M6 0l5 6H7.500v5h-3V6H1z" /></svg></button>
                <button className={`flex-1 h-[20px] text-[11px] leading-[18px] font-bold text-[#f2f2f2] ${RAISED}`}>Mngr</button>
            </div>
        </div>
        <div className={`flex flex-col flex-1 min-w-0 pl-[3px] pr-[3px] pt-[8px] ${ARIAL}`}>
            <div className="flex gap-[3px]">
                <div className="w-[49px] shrink-0 border-r border-b border-[#888]">
                    <div className="relative h-[90px] bg-black">
                        <PlayCorner />
                        <svg width="47" height="90" className="absolute left-0 top-0 pointer-events-none" fill="none" stroke="#1d8466" strokeWidth="1.5"><path d="M0 5h23M34 15l1 28 2 25 2 17" /></svg>
                    </div>
                    <div className="flex pt-[2px]">
                        <button aria-label="Save slot" className={`w-[16px] h-[20px] overflow-hidden ${RAISED}`}><svg width="14" height="16" viewBox="9 0 14 16" fill="none" stroke="#f2f2f2" strokeWidth="1.5"><path d={floppy} /></svg></button>
                        <SlotButton label="Clear slot" d={close} thick />
                    </div>
                </div>
                <div className="w-[97px] shrink-0 border-r border-b border-[#888]">
                    <div className="relative flex items-start h-[90px] bg-black">
                        <span className="pl-[5px] text-[14px] leading-[18px] text-white">125</span>
                        <PlayCorner />
                        <svg width="96" height="90" className="absolute left-0 top-0 pointer-events-none" fill="none">
                            <g stroke="#1fe63f" strokeWidth="1.5">
                                <ellipse cx="45" cy="46" rx="14" ry="31" transform="rotate(4 45 46)" /><ellipse cx="52" cy="44" rx="15" ry="32" transform="rotate(-5 52 44)" />
                                <ellipse cx="48" cy="45" rx="18" ry="28" /><ellipse cx="48" cy="45" rx="8" ry="27" transform="rotate(-9 48 45)" /><ellipse cx="52" cy="46" rx="9" ry="25" transform="rotate(7 52 46)" />
                                <path d="M40 10l2 16 1 40-1 20M55 5l-1 20 2 52M46 20q2 30 10 48" />
                            </g>
                            <path d="M38 26q-5 20 2 40M60 22q6 22-3 44M43 14l8 3M54 24l4 8" stroke="#b8563c" strokeWidth="1.5" />
                        </svg>
                    </div>
                    <div className="flex pt-[2px]">
                        <button aria-label="Load slot" className="flex items-center justify-center flex-1 h-[20px] border border-[#c8c8c8] bg-[#9a9a9a]"><svg width="13" height="12"><path d="M6.500 1l5 6H9v4H4V7H1.500z" fill="#f2bc22" stroke="#4a3200" /></svg></button>
                        <SlotButton label="Save slot" d={floppy} />
                        <SlotButton label="Clear slot" d={close} thick />
                    </div>
                </div>
                <div className="flex-1 border-r border-b border-[#888]">
                    <div className="flex items-start h-[90px] bg-[#303030]">
                        <span className="pl-[5px] text-[14px] leading-[18px] text-white">126</span>
                        <PlayCorner />
                    </div>
                    <div className="flex pt-[2px]">
                        <button aria-label="Load slot" className={`flex items-center justify-center flex-1 h-[20px] ${RAISED}`}><svg width="11" height="10" fill="#fff"><path d="M5.500 1l4 5H7.500v3h-4V6h-2z" /></svg></button>
                        <SlotButton label="Save slot" d={floppy} muted />
                        <SlotButton label="Clear slot" d={close} muted thick />
                    </div>
                </div>
            </div>
            <div className="flex items-center gap-[3px] mt-[5px]">
                <input type="range" aria-label="Scroll slots" defaultValue={100} className="flex-1 min-w-0 appearance-none h-[4px] bg-[#8b8982] border-t border-[#222] [&::-webkit-slider-thumb]:appearance-none [&::-webkit-slider-thumb]:w-[14px] [&::-webkit-slider-thumb]:h-[14px] [&::-webkit-slider-thumb]:bg-[#4a4a4a] [&::-webkit-slider-thumb]:border [&::-webkit-slider-thumb]:border-[#222]" />
                <button aria-label="Add slot" className={`flex items-center justify-center w-[18px] h-[19px] ${RAISED}`}><svg width="10" height="10" stroke="#e5e5e5" strokeWidth="1.5"><path d="M5 0v10M0 5h10" /></svg></button>
            </div>
        </div>
    </div>
)

const Sidebar = () => (
    <aside className={`flex flex-col w-[375px] shrink-0 bg-[#303030] ${VERDANA}`}>
        <div className="h-[109px] shrink-0" />
        <PanelHeader title="ICON HISTORY" />
        <IconHistory />
        <PanelHeader title="MAIN MENU" />
        <MainMenu />
        <PanelHeader title="DISPLAY" />
        <Display />
        <PanelHeader title="SNAPS" />
        <Snaps />
        <PanelHeader title="INFO & SETTINGS" />
        <PanelHeader title="LAYERS" />
        <Layers />
        <PanelHeader title="PROJECTS" />
        <Projects />
        <Expander />
    </aside>
)

/* ---------- workspace ---------- */

const pillar = 'M7 9h8v3h-3v14h3v3H7M10 12v14'
const strip = [
    'M14 4A12 12 0 0 0 14 30', 'M6 30l9-9v9z', 'M14 8Q8 20 14 32M7 20h8M14 12Q4 20 14 28', 'M14 22a4 5 0 1 0 0 9z',
    'M7 27h8M7 27l3-3M7 27l3 3M11 16l4-4', pillar, pillar, pillar, pillar,
    'M10 10l5-3v16l-5-3z', 'M8 24l7-12M8 24h7', 'M7 9h8v19H7z', 'M15 9l-7 4 3 5-3 5 7 6z',
]

const ToolStrip = () => (
    <div className="flex flex-col w-[13px] ml-[3px] mr-[9px] mb-[7px] overflow-hidden bg-[#f0eff1]">
        <div className="h-[5px] shrink-0 border-y border-[#6d6d75]" />
        {strip.map((d, i) => (
            <button key={i} aria-label={`Tool ${i + 1}`} className={`w-[13px] h-[38px] shrink-0 border-l border-b-2 border-[#b4b4b6] ${i === 0 ? 'mt-[2px]' : ''} ${i === 4 ? 'mt-[6px]' : ''} ${i === 8 ? 'bg-[#bcd3e4]' : 'bg-[#f2f2f3]'}`}>
                <svg width="12" height="36" viewBox="2 0 12 36" fill={[1, 3, 9].includes(i) ? '#777' : i === 12 ? '#7a2c9c' : 'none'} stroke={i === 0 ? '#c33' : i === 12 ? '#7a2c9c' : d === pillar ? '#5c5c60' : '#8a8a8e'} strokeWidth={i === 0 ? 3 : 1.5}><path d={d} /></svg>
            </button>
        ))}
    </div>
)

interface TabProps {
    label: string;
    active?: boolean;
}

const Tab = ({ label, active }: TabProps) => (
    <button role="tab" aria-selected={!!active} className={`flex h-[24px] text-[14px] leading-[22px] ${active ? 'z-10 -ml-[10px]' : ''}`}>
        {active ? (
            <svg width="17" height="24"><path d="M0 24L13 2Q15 .5 17 .5V24z" fill="#81b28a" /><path d="M0 24L13 2Q15 .5 17 .5" fill="none" stroke="#555" /></svg>
        ) : (
            <svg width="11" height="24"><path d="M0 24V11L8 2Q9 .5 11 .5V24z" fill="#dbebee" /><path d="M.5 24V11L8 2Q9 .5 11 .5" fill="none" stroke="#555" /></svg>
        )}
        <span className={`h-[24px] border-t border-r border-[#555] rounded-tr-[6px] whitespace-nowrap ${active ? 'bg-[#81b28a] pl-[8px] pr-[8px] text-[#10321c]' : 'bg-[#dbebee] pl-[3px] pr-[8px] text-[#2b2f33]'}`}>{label}</span>
    </button>
)

type Block = [number, number, string]

/* one ring body: top, middle and bottom bands, in thirds of a pixel */
const Band = ({ y, h, blocks }: { y: number; h: number; blocks: Block[] }) => (
    <>{blocks.map(([x, w, fill]) => <rect key={x} x={x} y={y} width={w} height={h} fill={fill} />)}</>
)

const LIGHT = '#38ad82'
const DARK = '#00734a'

const ringA: Block[] = [[349, 188, LIGHT], [540, 440, DARK], [985, 95, LIGHT]]
const ringAMid: Block[] = [[349, 188, LIGHT], [545, 13, '#000'], [576, 32, '#003d28'], [619, 226, '#000'], [691, 3, '#333'], [790, 3, '#333'], [878, 62, LIGHT], [948, 28, LIGHT], [985, 95, LIGHT]]
const ringB: Block[] = [[134, 301, LIGHT], [440, 488, '#007a4e'], [930, 107, '#68e3b8'], [1043, 27, '#239668']]
const ringBMid: Block[] = [
    [134, 50, '#003a26'], [195, 53, '#005036'], [255, 46, '#000'], [311, 49, '#004a30'], [366, 54, '#006e48'], [421, 15, LIGHT], [475, 16, '#000'], [516, 20, '#006e48'],
    [635, 24, '#012a1c'], [708, 38, '#004d33'], [753, 19, '#006040'], [783, 16, '#000'], [932, 43, '#000'], [984, 52, '#006b48'], [1046, 22, '#006040'],
]
const ringC: Block[] = [[222, 50, LIGHT], [275, 730, 'url(#band)'], [1012, 34, '#00251a']]
const ringCMid: Block[] = [
    [225, 50, '#003624'], [283, 54, LIGHT], [345, 28, '#00553a'], [410, 8, '#005536'], [427, 62, LIGHT], [497, 15, '#00553a'], [517, 90, 'url(#shine)'],
    [612, 53, '#005c3c'], [670, 22, '#000'], [713, 45, '#108660'], [762, 183, LIGHT], [948, 64, '#007045'], [1020, 30, LIGHT],
]

const Ring = ({ x, w, face, mid }: { x: number; w: number; face: Block[]; mid: Block[] }) => (
    <>
        <rect x={x} y="75" width={w} height="272" fill="#007f52" />
        <path d={`M${x + 50} 73h${w - 110}`} stroke="#007f52" strokeWidth="5" strokeDasharray="36 22 18 30 60 14" />
        <Band y={82} h={90} blocks={face} />
        <Band y={181} h={89} blocks={mid} />
        <Band y={278} h={60} blocks={face} />
    </>
)

const OX = 632.5
const OY = 400
const STEP = 32.6
const cols = Array.from({ length: 40 }, (_, i) => i - 19)
const rows = Array.from({ length: 34 }, (_, i) => i - 12)

const Scene = () => (
    <svg className="block w-full h-full" fill="none">
        {cols.map((i) => <path key={i} d={`M${OX + i * STEP} 0V894`} stroke="#353535" strokeWidth="1.5" />)}
        {rows.map((i) => <path key={i} d={`M0 ${OY + i * STEP}H${OX + 20 * STEP}`} stroke="#353535" strokeWidth="1.5" />)}
        {cols.filter((i) => i % 5 === 0 && i < 20).concat(20).map((i) => <path key={i} d={`M${OX + i * STEP} 0V894`} stroke="#686868" strokeWidth="1.6" />)}
        {rows.filter((i) => i % 5 === 0).map((i) => <path key={i} d={`M0 ${OY + i * STEP}H${OX + 20 * STEP}`} stroke="#686868" strokeWidth="1.6" />)}
        <path d={`M${OX} 0V${OY}`} stroke="#2b8996" strokeWidth="2.5" />
        <path d="M633 400H1223" stroke="#9c2020" strokeWidth="3" />

        <g transform="translate(271 374) scale(.33333)" stroke="none">
            <path d="M213 79H345M190 343H345M1085 175H1322M1085 274H1322" stroke="#0f8257" strokeWidth="5" />
            <path d="M237 85V340M1275 28V100M1275 350V420" stroke="#0f8257" strokeWidth="5" />
            <path d="M237 82l25 98h-50zM237 343l25-98h-50zM1275 175l25-97h-50zM1275 276l25 96h-50z" fill="#15855a" />
            <Ring x={343} w={742} face={ringA} mid={ringAMid} />
        </g>
        <g transform="translate(731 374) scale(.33333)"><Ring x={127} w={949} face={ringB} mid={ringBMid} /></g>
        <g transform="translate(1151 374) scale(.33333)"><Ring x={217} w={833} face={ringC} mid={ringCMid} /></g>

        <g fontFamily="Liberation Sans, sans-serif" fontSize="46" fill="#178a5d" stroke="#178a5d" strokeWidth=".6">
            <text transform="translate(342 488) rotate(-90)">2.66</text>
            <text transform="translate(688 488) rotate(-90)">1.00</text>
        </g>

        <g strokeWidth="2">
            <path d="M46 811V848" stroke="#c98a32" /><path d="M46 848H82" stroke="#2a8394" />
        </g>
        <g fontFamily="DejaVu Sans, sans-serif" fontWeight="bold" fontSize="14">
            <text x="49" y="813" fill="#d8922f">z</text><text x="86" y="850" fill="#2e8fa2">y</text>
        </g>
    </svg>
)

const RingMarker = () => (
    <svg width="30" height="66" viewBox="545 410 90 198" className="absolute right-[39px] top-[10px]" fill="none" strokeWidth="5">
        <path d="M552 432L570 418H615L625 432L598 452L568 447Z M552 432H625M570 418L590 432L598 452L612 432V418" stroke="#3f70c4" />
        <path d="M597 449L624 465L610 530V592L597 605L584 592V530L568 465ZM570 476H622M582 530H612M584 592L597 585L610 592" stroke="#e3a33c" />
    </svg>
)

const Workspace = () => (
    <main className="flex flex-col flex-1 min-w-0 border-[#b1b1b1] border-l-[8px] border-r-[9px] border-t-[7px] border-b-[8px] bg-[#d7dfe1]">
        <div className="flex items-start h-[31px] pt-[4px] pl-[3px] pr-px shrink-0">
            <span className="w-[4px] h-[24px] mr-[2px] border-x border-[#6d6d75]" />
            <div className={`flex flex-1 items-center h-[23px] pb-[2px] bg-[#81b28a] ${ARIAL}`}>
                <label htmlFor="command" className="text-[16px] leading-[20px] font-bold text-[#10321c]">Command:</label>
                <input id="command" className="flex-1 min-w-0 h-[20px] bg-transparent outline-none" />
            </div>
            <div className="flex flex-col justify-between w-[17px] h-[23px] ml-[2px]">
                {['M0 6h8L4 1z', 'M0 0h8L4 5z'].map((d, i) => (
                    <button key={d} aria-label={i ? 'Scroll down' : 'Scroll up'} className="flex items-center justify-center h-[11px] border border-[#a9a9a9] bg-[#f4f4f4]"><svg width="8" height="6"><path d={d} /></svg></button>
                ))}
            </div>
        </div>
        <div className="flex flex-1 min-h-0">
            <div className="flex pt-[10px]"><ToolStrip /></div>
            <div className={`flex flex-col flex-1 min-w-0 pr-px ${SEGOE}`}>
                <div role="tablist" className="flex items-end h-[30px] pb-px shrink-0">
                    <Tab label="Perspective" />
                    <Tab label="Through Finger" />
                    <Tab label="Side View" active />
                    <Tab label="Looking Down" />
                    <button aria-label="New tab" className="flex h-[24px]">
                        <svg width="11" height="24"><path d="M.5 12L8 2Q9 .5 11 .5" fill="none" stroke="#555" /></svg>
                        <span className="flex items-center justify-center w-[28px] h-[24px] border-t border-r border-[#555] rounded-tr-[6px]">
                            <svg width="12" height="12" fill="#f4f4f4" stroke="#666"><path d="M4.500 .5h3v4h4v3h-4v4h-3v-4h-4v-3h4z" /></svg>
                        </span>
                    </button>
                </div>
                <div className="relative flex-1 min-h-0 mb-[2px] overflow-hidden border-t border-[#4c5352] bg-black">
                    <div className="h-full"><Scene /></div>
                    <button className="absolute left-0 top-0 flex items-center w-[99px] h-[23px] pl-[12px] rounded-br-[4px] bg-[#81b28a] text-[14px] text-[#10321c] whitespace-nowrap">
                        Side View
                        <span className="w-px h-[19px] ml-auto bg-[#10321c]" />
                        <svg width="10" height="6" className="mx-px"><path d="M1 0h8L5 5z" /></svg>
                    </button>
                    <RingMarker />
                </div>
            </div>
        </div>
    </main>
)

/* ---------- taskbar ---------- */

interface TaskProps {
    label: string;
    children: ReactNode;
    tone?: string;
    bar?: string;
}

const Task = ({ label, children, tone = '', bar }: TaskProps) => (
    <button aria-label={label} className={`relative flex items-center justify-center w-[62px] h-[50px] ${tone}`}>
        {children}
        {bar && <span className={`absolute bottom-0 h-[3px] ${bar}`} />}
    </button>
)

const Taskbar = () => (
    <footer className={`flex items-center h-[50px] shrink-0 bg-linear-to-r from-[#263840] to-[#1c2930] text-white ${SEGOE}`}>
        <button aria-label="Start" className="flex items-center justify-center w-[60px] h-[50px]">
            <svg width="20" height="20" fill="#fff"><path d="M0 3l9-1.300V9.500H0zM10 1.500L20 0v9.500H10zM0 10.500h9v8L0 17zM10 10.500h10V20l-10-1.500z" /></svg>
        </button>
        <div className="flex items-center w-[429px] h-[49px] pl-[14px] bg-[#f1f1f1]">
            <svg width="22" height="22" fill="none" stroke="#222" strokeWidth="1.5"><circle cx="13.5" cy="8" r="7" /><path d="M8.500 13L1 20.500" /></svg>
            <input aria-label="Search" placeholder="Type here to search" className="flex-1 min-w-0 ml-[14px] bg-transparent text-[17px] outline-none placeholder:text-[#3c3c3c]" />
        </div>
        <Task label="Cortana"><svg width="20" height="20"><circle cx="10" cy="10" r="8.5" fill="none" stroke="#fff" strokeWidth="2.5" /></svg></Task>
        <Task label="Task View"><svg width="22" height="20" fill="none" stroke="#e8e8e8" strokeWidth="1.3"><path d="M1 0v4h12V0M1 20v-4h12v4M1 4v12M13 4v12M18.500 0v5M18.500 10v10" /><path d="M17 6h3v3h-3z" fill="#fff" stroke="none" /></svg></Task>
        <Task label="Edge">
            <svg width="30" height="30" viewBox="0 0 30 30">
                <defs>
                    <linearGradient id="edgeTop"><stop offset="0" stopColor="#1b8fd6" /><stop offset=".6" stopColor="#35c1c9" /><stop offset="1" stopColor="#66d85c" /></linearGradient>
                </defs>
                <circle cx="15" cy="15" r="15" fill="#1173c9" />
                <path d="M0 13Q3 0 16 0Q29 1 30 12Q30 19 22 19Q18 18 19 16Q20 9 12 8Q4 8 0 13z" fill="url(#edgeTop)" />
                <path d="M10 13Q12 9 16 10Q20 12 19 16Q17 18 22 20Q27 21 29 18Q24 30 14 30Q6 27 7 19Q8 15 10 13z" fill="#0c4f9c" />
                <path d="M13 14q-3 7 5 12 6 1 9-4-8 2-12-2-3-3-2-6z" fill="#1b2f3a" />
            </svg>
        </Task>
        <Task label="File Explorer" bar="w-[51px] bg-[#80b4dc]">
            <svg width="28" height="24"><path d="M0 2q0-2 2-2h8l3 3h13v6H0z" fill="#dc9c22" /><path d="M0 5h28v17H0z" fill="#f8d673" /><path d="M5 24v-8q0-2 2-2h14q2 0 2 2v8h-5v-5h-8v5z" fill="#4596c4" /></svg>
        </Task>
        <Task label="Chrome" bar="w-[51px] bg-[#80b4dc]">
            <svg width="32" height="32" viewBox="0 0 32 32">
                <circle cx="15" cy="15" r="14" fill="#2d9d4c" />
                <path d="M3 7.500A14 14 0 0 1 28 9.500H15L9 14z" fill="#dc4034" /><path d="M28.500 10A14 14 0 0 1 15 29l6-11V10z" fill="#f2c42c" />
                <circle cx="14" cy="14" r="6.5" fill="#fff" /><circle cx="14" cy="14" r="5" fill="#3c76d8" />
                <circle cx="22" cy="22" r="9.5" fill="#6d4b38" /><path d="M18 15q5-4 8 1l-1 6q-3 3-5-1z" fill="#dcc2b0" /><path d="M14 25q8-5 16 0-4 6-8 6.500-5-1-8-6.500z" fill="#2c4a40" /><path d="M20 23l4 0-1 7h-3z" fill="#e4e0dc" /><path d="M18 18h8v2h-8z" fill="#1a1a1a" />
            </svg>
        </Task>
        <Task label="Matrix" tone="bg-[#546062]" bar="w-[61px] bg-[#80b4dc]"><MatrixLogo className="w-[30px] h-[30px]" /></Task>
        <Task label="Rhinoceros" tone="bg-[#b1672b]" bar="w-[62px] bg-[#f07a1e]">
            <svg width="30" height="30" viewBox="0 0 30 30">
                <rect width="30" height="30" fill="#0c0c0e" />
                <path d="M1 0h7q-1 6-3 9l-4 3zM14 0h13l1 3-9 2-2 3-4-3z" fill="#cfc8cc" />
                <path d="M3 11q6-4 9-7l5 5 8 4 1 3 2-5 1 12-1 5q-3 2-6 0l-6-5-7-4-7-3z" fill="#f2eef0" />
                <path d="M8 10l3 6 6 4 5 0M12 12q3 4 6 3M22 23l4 1" fill="none" stroke="#3a3236" strokeWidth="1.3" />
            </svg>
        </Task>
        <div className="flex items-center ml-auto text-[14px]">
            <svg width="20" height="20" className="mr-[12px]" fill="none" stroke="#eee" strokeWidth="1.5"><path d="M2 14l8-8 8 8" /></svg>
            <svg width="18" height="20" className="mr-[12px]" fill="none" stroke="#eee" strokeWidth="1.3"><path d="M2 5h9v10H2zM11 9l4-3v8l-4-3M3 2q4-2 8 0M3 18q4 2 8 0" /></svg>
            <svg width="22" height="20" className="mr-[10px]"><path d="M1 4h16v10H1z" fill="none" stroke="#eee" strokeWidth="1.5" /><path d="M3 6h8v6H3z" fill="#fff" /><circle cx="14" cy="13" r="6" fill="#17803c" /><path d="M14 9q4 4 0 7-4-3 0-7zM14 13v4" fill="none" stroke="#dff5e0" /></svg>
            <svg width="18" height="18" className="mr-[9px]" fill="none" stroke="#ddd" strokeWidth="1.4"><path d="M1 16Q2 2 16 2M5 17Q6 6 16 6M9 17q1-7 7-7" /><circle cx="14.5" cy="15.5" r="2" fill="#fff" stroke="none" /></svg>
            <svg width="20" height="18" className="mr-[13px]" fill="none" stroke="#eee" strokeWidth="1.4"><path d="M1 6h3l5-4v13l-5-4H1zM12 6l6 6M18 6l-6 6" /></svg>
            <button>ENG</button>
            <button className="w-[74px] ml-[13px] mr-[20px] text-center leading-[23px]">
                <time className="block">11:56 PM</time>
                <time className="block">4/10/2021</time>
            </button>
            <button aria-label="Notifications" className="relative flex w-[30px] h-[30px] mr-[15px]">
                <svg width="20" height="20"><path d="M0 0h20v16h-6l-4 4v-4H0z" fill="#fff" /><path d="M4 5h12M4 8h12M4 11h9" stroke="#26343a" strokeWidth="1.2" /></svg>
                <span className="absolute left-[9px] top-[9px] flex items-center justify-center w-[21px] h-[21px] rounded-full border border-[#aaa] bg-[#3b4346] text-[12px]">1</span>
            </button>
            <span className="w-px h-[50px] mr-[5px] bg-[#5c686d]" />
        </div>
    </footer>
)

const App = () => {
    return (
        <div className="flex flex-col min-h-screen bg-[#e9e9e9]">
            <Gradients />
            <TitleBar />
            <MenuBar />
            <div className="flex flex-1">
                <Sidebar />
                <div className="flex flex-1 min-w-0 pt-[2px] border-l border-white"><Workspace /></div>
            </div>
            <Taskbar />
        </div>
    )
}

export default App
